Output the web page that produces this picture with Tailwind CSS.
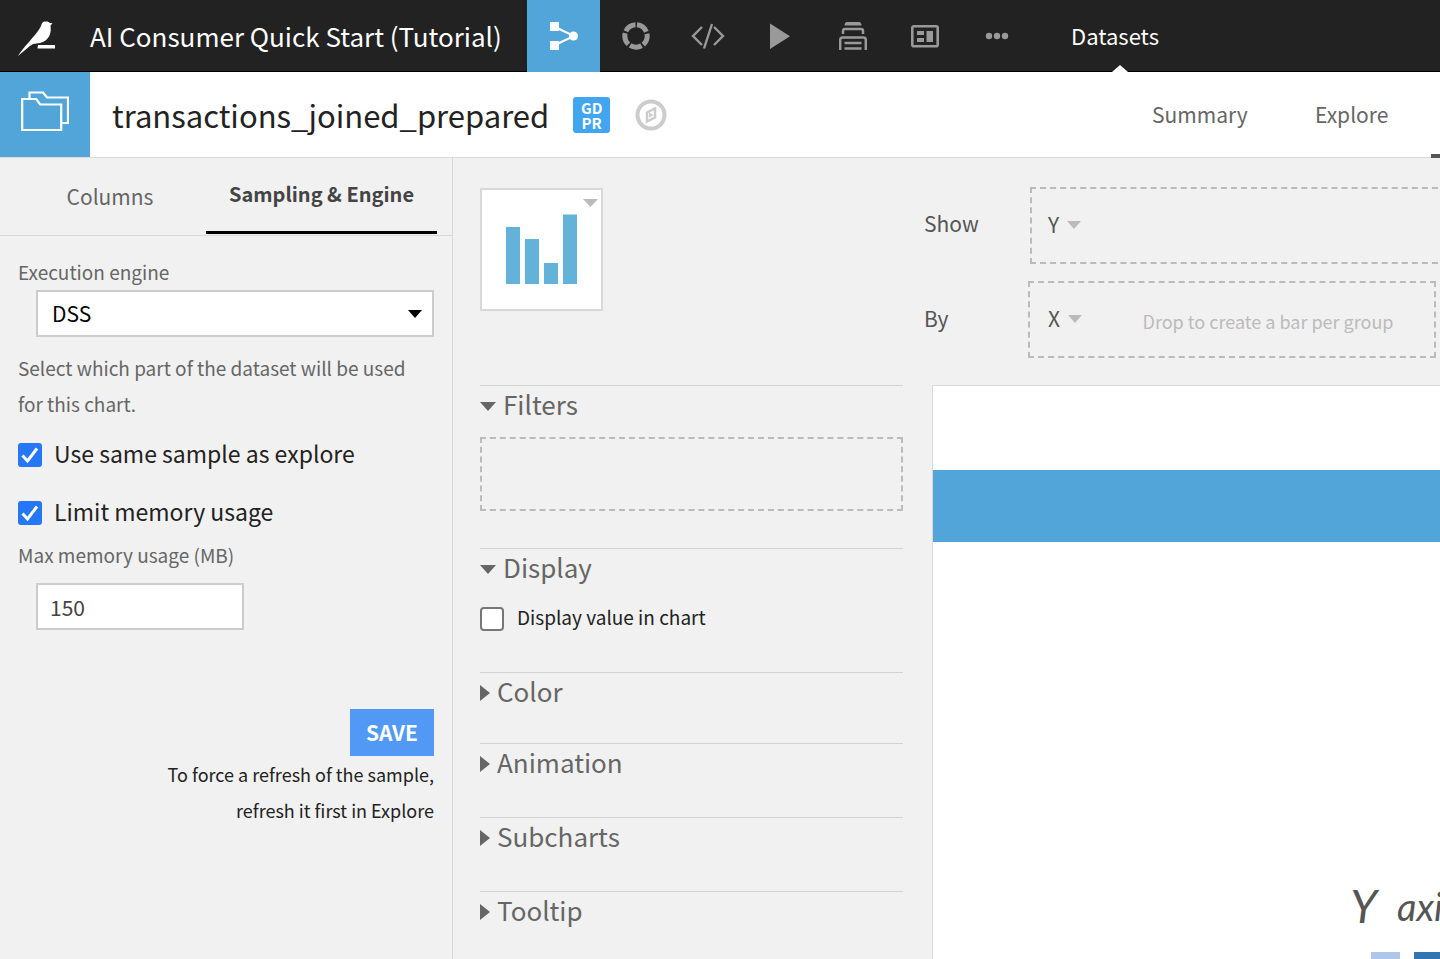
<!DOCTYPE html>
<html lang="en">
<head>
<meta charset="utf-8">
<title>transactions_joined_prepared</title>
<script src="https://cdn.jsdelivr.net/npm/@tailwindcss/browser@4"></script>
</head>
<body class="flex h-screen flex-col overflow-hidden bg-[#f1f1f1] font-['Noto_Sans_CJK_SC','Noto_Sans',sans-serif] text-[#222]">

<header class="flex h-18 shrink-0 border-b border-black bg-[#222] text-white">
  <a href="#" aria-label="Home" class="flex w-[90px] shrink-0 items-center pl-[18px]">
    <svg class="h-9 w-10 overflow-visible" viewBox="0 0 40 36" fill="#fff"><path d="M0 38 C3 33 7 28 11 24 C15 19 18 16 20 13 C22 10 23 8 23.500 6.500 C24 4 26 3.600 28 3.600 C30 3.600 31 4.300 32 5 L34.500 5.200 L32.500 7.500 C33 11 33 15 31 18.500 C29 22 26 24 22 25 L15 26 C10 29 5 34 0 38Z"/><path d="M20 27 H37 V30.500 H19.500Z"/></svg>
  </a>
  <h1 class="w-[437px] shrink-0 text-[26px] leading-18 whitespace-nowrap">AI Consumer Quick Start (Tutorial)</h1>
  <nav class="flex shrink-0 text-[#999]" aria-label="Project">
    <button aria-label="Flow" class="-mb-px flex w-[73px] items-center justify-center bg-[#51a5d8] text-white">
      <svg class="size-7" viewBox="0 0 28 28" fill="currentColor"><path d="M4 4.500 24 14 4 23.500" fill="none" stroke="currentColor" stroke-width="2"/><path d="M0 0h9v9H0zM0 19h9v9H0z"/><circle cx="23.500" cy="14" r="4.500"/></svg>
    </button>
    <button aria-label="Analyses" class="flex w-18 items-center justify-center">
      <svg class="size-7" viewBox="0 0 28 28"><circle cx="14" cy="14" r="11.200" fill="none" stroke="currentColor" stroke-width="5" stroke-dasharray="12.070 2" stroke-dashoffset="-1" transform="rotate(-90 14 14)"/></svg>
    </button>
    <button aria-label="Notebooks" class="flex w-18 items-center justify-center">
      <svg class="h-7 w-[34px]" viewBox="0 0 34 28" fill="none" stroke="currentColor" stroke-width="2.400"><path d="M11 5 2 14l9 9M23 5l9 9-9 9M21 2l-8 24.500"/></svg>
    </button>
    <button aria-label="Jobs" class="flex w-18 items-center justify-center">
      <svg class="h-7 w-5" viewBox="0 0 20 28" fill="currentColor"><path d="M0 1.500V27L20 14.200Z"/></svg>
    </button>
    <button aria-label="Automation" class="flex w-[73px] items-center justify-center">
      <svg class="size-7" viewBox="0 0 28 28" fill="none" stroke="currentColor" stroke-width="2.500"><path d="M5.500 3.500C6 0 7 0 9 0h10c2 0 3 0 3.500 3.500" fill="currentColor" stroke="none"/><path d="M4 12V9c0-1.500.5-2 2-2h16c1.500 0 2 .5 2 2v3M1.200 28V18c0-1.700.6-2.500 2.300-2.500h21c1.700 0 2.300.8 2.300 2.500v10M5.500 21h17M5.500 26.500h17"/></svg>
    </button>
    <button aria-label="Dashboards" class="flex w-18 items-center justify-center">
      <svg class="h-6 w-7" viewBox="0 0 28 24" fill="currentColor"><rect x="1.300" y="2.300" width="25.400" height="20" rx="1.500" fill="none" stroke="currentColor" stroke-width="2.600"/><path d="M6 7h7v4H6zM6 14h7v4H6zM15.500 7H22v11h-6.500z"/></svg>
    </button>
    <button aria-label="More" class="flex w-18 items-center justify-center">
      <svg class="h-2 w-6" viewBox="0 0 24 8" fill="currentColor"><circle cx="4" cy="4" r="3.200"/><circle cx="12" cy="4" r="3.200"/><circle cx="20" cy="4" r="3.200"/></svg>
    </button>
  </nav>
  <a href="#" class="relative ml-[38px] shrink-0 text-[22px] leading-[70px]">Datasets
    <svg class="absolute -bottom-px left-[41px] h-[7px] w-4" viewBox="0 0 16 7" fill="#fff"><path d="M0 7 8 0l8 7z"/></svg>
  </a>
</header>

<div class="flex h-[86px] shrink-0 border-b border-[#d9d9d9] bg-white">
  <div class="flex w-[90px] shrink-0 items-center justify-center bg-[#51a5d8] pb-2">
    <svg class="h-10 w-12" viewBox="0 0 48 40" fill="none" stroke="#fff" stroke-width="2.200"><path d="M1.200 8h14l4 5.500h21V39h-39z"/><path d="M8.500 8V1.500H22l4 5H47V32h-7"/></svg>
  </div>
  <h2 class="ml-[22px] text-[31px] leading-[86px]">transactions_joined_prepared</h2>
  <div class="ml-6 flex items-center pt-px">
    <span class="grid h-9 w-[37px] place-content-center rounded-[3px] bg-[#42a5f0] text-center text-[15px] leading-[15px] font-bold text-white">GD<br>PR</span>
  </div>
  <button aria-label="Navigate" class="ml-[25px] flex items-center">
    <svg class="size-8" viewBox="0 0 32 32" fill="none" stroke="#ccc"><circle cx="16" cy="16" r="13.500" stroke-width="4"/><path d="M12 13.500 20 9.500v9L12 22.500z" stroke-width="2.500"/><path d="m14 13.500 4.500 2.500-4.500 3z" fill="#ccc" stroke="none"/></svg>
  </button>
  <nav class="ml-auto flex shrink-0 text-[21px] leading-[84px] text-[#666]" aria-label="Dataset">
    <a href="#" class="w-[163px]">Summary</a>
    <a href="#" class="w-[116px]">Explore</a>
    <a href="#" aria-label="Charts" class="-mb-px w-[9px] border-b-4 border-[#555]"></a>
  </nav>
</div>

<div class="flex min-h-0 flex-1">
  <aside class="w-[453px] shrink-0 border-r border-[#d9d9d9]">
    <div class="flex h-[78px] border-b border-[#d9d9d9] pr-[15px] pl-[14px]" role="tablist">
      <button role="tab" aria-selected="false" class="w-48 text-center text-[21px] text-[#666]">Columns</button>
      <button role="tab" aria-selected="true" class="mb-px flex-1 border-b-3 border-black pb-[2px] text-center text-[20px] font-bold text-[#444]">Sampling &amp; Engine</button>
    </div>
    <form class="px-[18px] pt-[18px] text-[19px] leading-9 text-[#666]">
      <label for="engine" class="block">Execution engine</label>
      <div class="relative ml-[18px]">
        <select id="engine" class="block h-[47px] w-full appearance-none border-2 border-[#ccc] bg-white pb-[2px] pl-[14px] text-[21px] text-black"><option>DSS</option></select>
        <svg class="pointer-events-none absolute top-5 right-3 h-2 w-[14px]" viewBox="0 0 14 8"><path d="M0 0h14L7 8z"/></svg>
      </div>
      <p class="mt-[13px]">Select which part of the dataset will be used for this chart.</p>
      <label class="mt-[13px] flex h-9 items-center gap-3 text-[23px] text-[#222]">
        <span class="relative mt-1 size-6 shrink-0">
          <input type="checkbox" checked class="peer block size-6 appearance-none rounded-[3px] bg-white checked:bg-[#2577f5]">
          <svg class="pointer-events-none absolute inset-0 size-6" viewBox="0 0 24 24" fill="none" stroke="#fff" stroke-width="3"><path d="m4.500 12.500 5 5.500L19 5.500"/></svg>
        </span>Use same sample as explore</label>
      <label class="mt-[22px] flex h-9 items-center gap-3 text-[23px] text-[#222]">
        <span class="relative mt-1 size-6 shrink-0">
          <input type="checkbox" checked class="peer block size-6 appearance-none rounded-[3px] bg-white checked:bg-[#2577f5]">
          <svg class="pointer-events-none absolute inset-0 size-6" viewBox="0 0 24 24" fill="none" stroke="#fff" stroke-width="3"><path d="m4.500 12.500 5 5.500L19 5.500"/></svg>
        </span>Limit memory usage</label>
      <label for="memory" class="mt-2 block">Max memory usage (MB)</label>
      <input id="memory" type="text" value="150" class="mt-[10px] ml-[18px] block h-[47px] w-52 border-2 border-[#ccc] bg-white px-3 text-[21px] text-[#444]">
      <div class="mt-[79px] flex flex-col items-end text-right text-[18px] text-[#222]">
        <button type="button" class="h-[47px] bg-[#5199f5] px-4 pb-[2px] text-[21px] font-bold text-white">SAVE</button>
        <p>To force a refresh of the sample,<br>refresh it first in Explore</p>
      </div>
    </form>
  </aside>

  <section class="ml-[27px] w-[423px] shrink-0">
    <div class="h-[227px] pt-[30px]">
      <button aria-label="Chart type" class="relative block size-[123px] border-2 border-[#d9d9d9] bg-white">
        <svg class="size-full" viewBox="0 0 119 119" fill="#62b2da"><path d="M24 37h14v57H24zM43 49h14v45H43zM62 73h14v21H62zM81 24.500h14V94H81z"/><path fill="#bbb" d="M101 9h15l-7.500 8z"/></svg>
      </button>
    </div>
    <div class="h-[163px] border-t border-[#d2d2d2]">
      <button class="flex h-9 items-center gap-[7px] text-[26px] leading-9 text-[#666]"><svg class="mt-1 h-[9px] w-4" viewBox="0 0 16 9" fill="currentColor"><path d="M0 0h16L8 9z"/></svg>Filters</button>
      <div class="mt-[15px] h-[74px] border-2 border-dashed border-[#bbb]"></div>
    </div>
    <div class="h-[124px] border-t border-[#d2d2d2]">
      <button class="flex h-9 items-center gap-[7px] text-[26px] leading-9 text-[#666]"><svg class="mt-1 h-[9px] w-4" viewBox="0 0 16 9" fill="currentColor"><path d="M0 0h16L8 9z"/></svg>Display</button>
      <label class="mt-[14px] flex h-9 items-center gap-[13px] text-[19px] text-[#222]"><input type="checkbox" class="mt-1 size-6 appearance-none rounded-[4px] border-2 border-[#777] bg-white">Display value in chart</label>
    </div>
    <div class="h-[71px] border-t border-[#d2d2d2]">
      <button class="flex h-9 items-center gap-[7px] text-[26px] leading-9 text-[#666]"><svg class="mt-1 h-4 w-[10px]" viewBox="0 0 10 16" fill="currentColor"><path d="M0 0v16l10-8z"/></svg>Color</button>
    </div>
    <div class="h-[74px] border-t border-[#d2d2d2]">
      <button class="flex h-9 items-center gap-[7px] text-[26px] leading-9 text-[#666]"><svg class="mt-1 h-4 w-[10px]" viewBox="0 0 10 16" fill="currentColor"><path d="M0 0v16l10-8z"/></svg>Animation</button>
    </div>
    <div class="h-[74px] border-t border-[#d2d2d2]">
      <button class="flex h-9 items-center gap-[7px] text-[26px] leading-9 text-[#666]"><svg class="mt-1 h-4 w-[10px]" viewBox="0 0 10 16" fill="currentColor"><path d="M0 0v16l10-8z"/></svg>Subcharts</button>
    </div>
    <div class="border-t border-[#d2d2d2]">
      <button class="flex h-9 items-center gap-[7px] text-[26px] leading-9 text-[#666]"><svg class="mt-1 h-4 w-[10px]" viewBox="0 0 10 16" fill="currentColor"><path d="M0 0v16l10-8z"/></svg>Tooltip</button>
    </div>
  </section>

  <main class="ml-[21px] flex min-w-0 flex-1 flex-col overflow-hidden text-[21px] text-[#555]">
    <div class="flex h-[227px] shrink-0 flex-col gap-[17px] pt-[29px]">
      <div class="flex h-[77px]">
        <span class="w-[106px] shrink-0 leading-[72px]">Show</span>
        <div class="-mr-2 flex flex-1 items-center border-2 border-dashed border-[#bbb] pb-[2px] pl-4">
          <button class="flex items-center gap-2">Y<svg class="h-2 w-[14px]" viewBox="0 0 14 8" fill="#bbb"><path d="M0 0h14L7 8z"/></svg></button>
        </div>
      </div>
      <div class="flex h-[77px] pr-1">
        <span class="w-[104px] shrink-0 leading-[74px]">By</span>
        <div class="flex flex-1 items-center border-2 border-dashed border-[#bbb] pb-[2px] pl-[18px]">
          <button class="flex items-center gap-2">X<svg class="h-2 w-[14px]" viewBox="0 0 14 8" fill="#bbb"><path d="M0 0h14L7 8z"/></svg></button>
          <span class="flex-1 pt-[6px] pl-5 text-center text-[18px] text-[#bbb]">Drop to create a bar per group</span>
        </div>
      </div>
    </div>
    <div class="ml-2 flex flex-1 flex-col overflow-hidden border-t border-l border-[#d9d9d9] bg-white">
      <div class="mt-[84px] h-18 shrink-0 bg-[#51a5d8]"></div>
      <div class="mt-auto flex flex-col items-end">
        <p class="-mr-[18px] flex items-center gap-5 font-['Lato',sans-serif] whitespace-nowrap text-[#555] italic"><span class="text-[46px] leading-[60px]">Y</span><span class="text-[38px] leading-[60px]">axis</span></p>
        <div class="mt-4 flex h-[7px] gap-[14px]"><span class="w-[29px] bg-[#aec7e8]"></span><span class="w-[26px] bg-[#3276b1]"></span></div>
      </div>
    </div>
  </main>
</div>
</body>
</html>
